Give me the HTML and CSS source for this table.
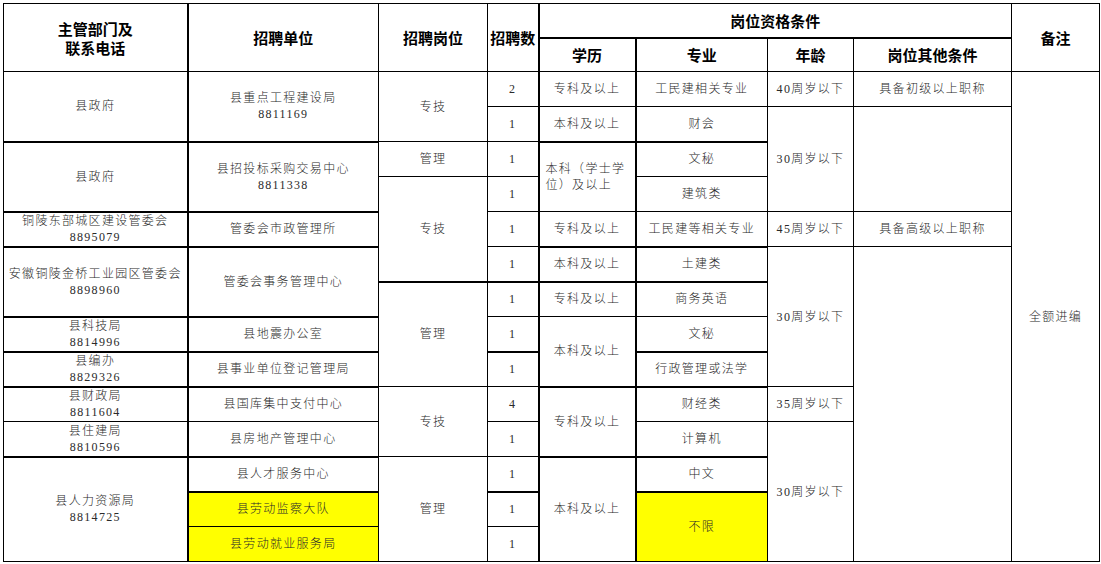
FILE: index.html
```html
<!DOCTYPE html>
<html lang="zh-CN">
<head>
<meta charset="utf-8">
<title>招聘岗位表</title>
<link rel="stylesheet" href="styles.css">
</head>
<body>
<div class="page">
<table class="sheet">
  <colgroup>
    <col class="w1"><col class="w2"><col class="w3"><col class="w4"><col class="w5"><col class="w6"><col class="w7"><col class="w8"><col class="w9">
  </colgroup>
  <thead>
    <tr class="hr">
      <th rowspan="2" class="hd">主管部门及<br>联系电话</th>
      <th rowspan="2" class="hd c2">招聘单位</th>
      <th rowspan="2" class="hd">招聘岗位</th>
      <th rowspan="2" class="hd">招聘数</th>
      <th colspan="4" class="hd c5">岗位资格条件</th>
      <th rowspan="2" class="hd">备注</th>
    </tr>
    <tr class="hr">
      <th class="hd c5 t">学历</th>
      <th class="hd c6 t">专业</th>
      <th class="hd t">年龄</th>
      <th class="hd t">岗位其他条件</th>
    </tr>
  </thead>
  <tbody>
    <tr>
      <td rowspan="2">县政府</td>
      <td rowspan="2" class="c2">县重点工程建设局<br>8811169</td>
      <td rowspan="2">专技</td>
      <td>2</td>
      <td class="c5">专科及以上</td>
      <td class="c6">工民建相关专业</td>
      <td>40周岁以下</td>
      <td>具备初级以上职称</td>
      <td rowspan="14">全额进编</td>
    </tr>
    <tr>
      <td>1</td>
      <td class="c5">本科及以上</td>
      <td class="c6">财会</td>
      <td rowspan="3">30周岁以下</td>
      <td rowspan="3"></td>
    </tr>
    <tr>
      <td rowspan="2" class="t">县政府</td>
      <td rowspan="2" class="c2 t">县招投标采购交易中心<br>8811338</td>
      <td>管理</td>
      <td>1</td>
      <td rowspan="2" class="c5 t left">本科（学士学<br>位）及以上</td>
      <td class="c6 t">文秘</td>
    </tr>
    <tr>
      <td rowspan="3">专技</td>
      <td>1</td>
      <td class="c6">建筑类</td>
    </tr>
    <tr>
      <td class="t">铜陵东部城区建设管委会<br>8895079</td>
      <td class="c2 t">管委会市政管理所</td>
      <td>1</td>
      <td class="c5">专科及以上</td>
      <td class="c6">工民建等相关专业</td>
      <td>45周岁以下</td>
      <td>具备高级以上职称</td>
    </tr>
    <tr>
      <td rowspan="2" class="t">安徽铜陵金桥工业园区管委会<br>8898960</td>
      <td rowspan="2" class="c2 t">管委会事务管理中心</td>
      <td>1</td>
      <td class="c5 t">本科及以上</td>
      <td class="c6 t">土建类</td>
      <td rowspan="4">30周岁以下</td>
      <td rowspan="9"></td>
    </tr>
    <tr>
      <td rowspan="3" class="t">管理</td>
      <td class="t">1</td>
      <td class="c5 t">专科及以上</td>
      <td class="c6 t">商务英语</td>
    </tr>
    <tr>
      <td class="t">县科技局<br>8814996</td>
      <td class="c2 t">县地震办公室</td>
      <td>1</td>
      <td rowspan="2" class="c5">本科及以上</td>
      <td class="c6">文秘</td>
    </tr>
    <tr>
      <td class="t">县编办<br>8829326</td>
      <td class="c2 t">县事业单位登记管理局</td>
      <td class="t">1</td>
      <td class="c6 t">行政管理或法学</td>
    </tr>
    <tr>
      <td class="t">县财政局<br>8811604</td>
      <td class="c2 t">县国库集中支付中心</td>
      <td rowspan="2">专技</td>
      <td>4</td>
      <td rowspan="2" class="c5 t">专科及以上</td>
      <td class="c6 t">财经类</td>
      <td>35周岁以下</td>
    </tr>
    <tr>
      <td>县住建局<br>8810596</td>
      <td class="c2">县房地产管理中心</td>
      <td>1</td>
      <td class="c6">计算机</td>
      <td rowspan="4">30周岁以下</td>
    </tr>
    <tr>
      <td rowspan="3" class="t">县人力资源局<br>8814725</td>
      <td class="c2 t">县人才服务中心</td>
      <td rowspan="3">管理</td>
      <td>1</td>
      <td rowspan="3" class="c5 t">本科及以上</td>
      <td class="c6 t">中文</td>
    </tr>
    <tr>
      <td class="c2 t hl">县劳动监察大队</td>
      <td class="t">1</td>
      <td rowspan="2" class="c6 t hl">不限</td>
    </tr>
    <tr>
      <td class="c2 hl">县劳动就业服务局</td>
      <td>1</td>
    </tr>
  </tbody>
</table>
</div>
</body>
</html>
```

FILE: styles.css
```css
html, body {
  margin: 0;
  padding: 0;
  background: #ffffff;
}

.page {
  padding: 3px 2px 0 3px;
}

.sheet {
  border-collapse: collapse;
  table-layout: fixed;
  width: 1096px;
  font-family: "Liberation Serif", "Noto Sans CJK SC", serif;
  font-size: 12px;
  font-weight: 300;
  letter-spacing: 1.3px;
  color: #2a2a2a;
}

.w1 { width: 184px; }
.w2 { width: 191px; }
.w3 { width: 109px; }
.w4 { width: 51px; }
.w5 { width: 97px; }
.w6 { width: 132px; }
.w7 { width: 86px; }
.w8 { width: 158px; }
.w9 { width: 88px; }

.sheet th,
.sheet td {
  border: 1px solid #000;
  padding: 0 2px;
  text-align: center;
  vertical-align: middle;
  line-height: 16px;
  white-space: nowrap;
  overflow: hidden;
}

.sheet tbody tr {
  height: 35px;
}

.sheet .hr {
  height: 34px;
}

.sheet .hd {
  font-family: "Noto Sans CJK SC", "Liberation Sans", sans-serif;
  font-size: 15px;
  font-weight: 700;
  letter-spacing: 0;
  color: #000;
  line-height: 19px;
  padding: 0;
}

.sheet .c2 { border-left-width: 2px; }
.sheet .c5 { border-left-width: 2px; }
.sheet .c6 { border-left-width: 2px; }
.sheet .t { border-top-width: 2px; }

.sheet .left {
  text-align: left;
  padding-left: 6px;
}

.sheet .hl {
  background: #ffff00;
}
```
